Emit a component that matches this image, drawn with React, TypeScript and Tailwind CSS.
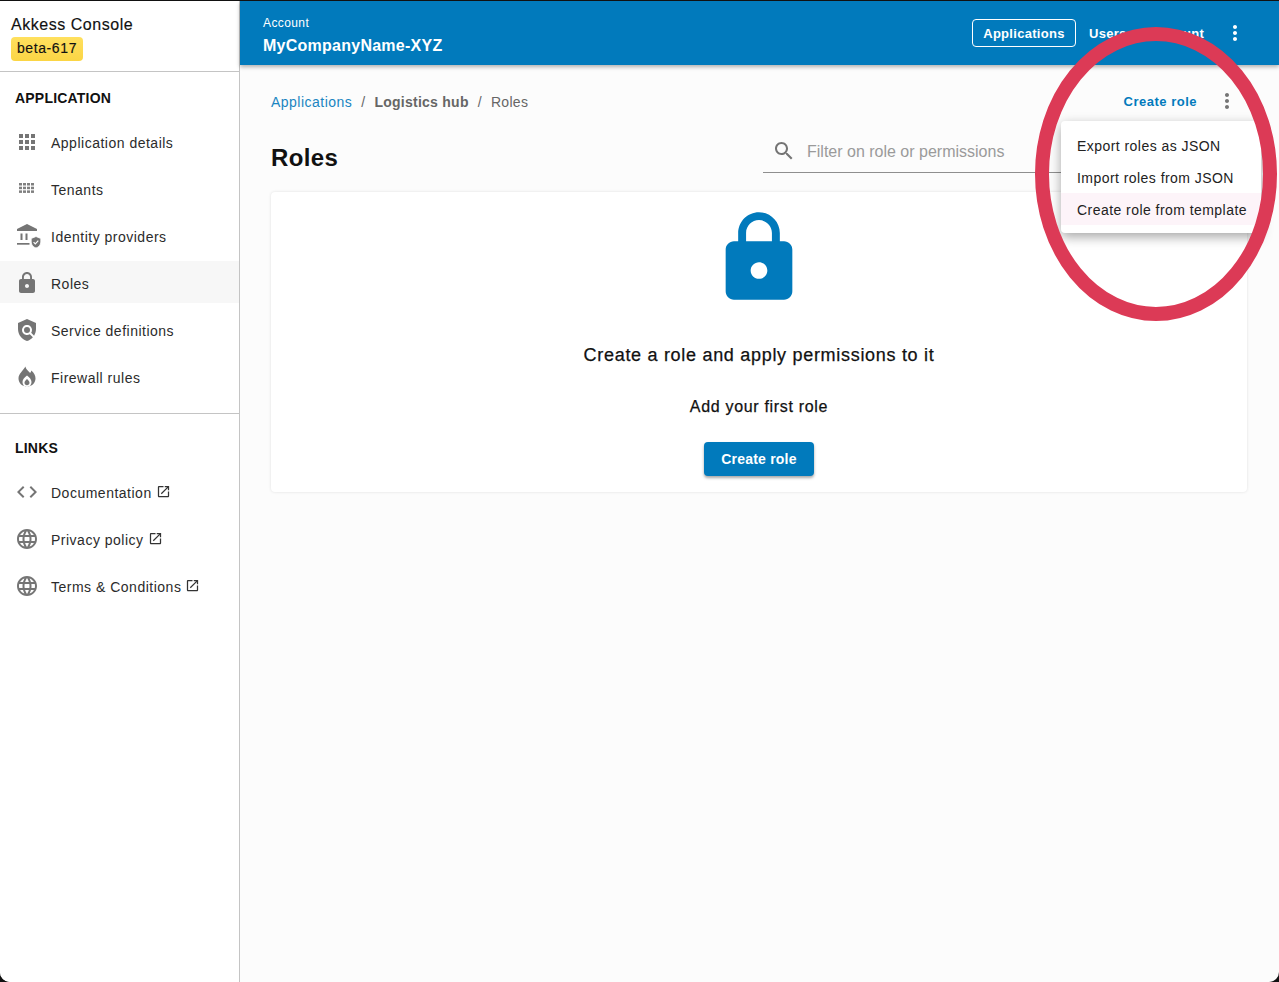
import React from 'react';

const font = { fontFamily: '"Liberation Sans", Arial, sans-serif' };

const paths = {
  apps: 'M4 8h4V4H4v4zm6 12h4v-4h-4v4zm-6 0h4v-4H4v4zm0-6h4v-4H4v4zm6 0h4v-4h-4v4zm6-10v4h4V4h-4zm-6 4h4V4h-4v4zm6 6h4v-4h-4v4zm0 6h4v-4h-4v4z',
  lock: 'M18 8h-1V6c0-2.76-2.24-5-5-5S7 3.24 7 6v2H6c-1.1 0-2 .9-2 2v10c0 1.1.9 2 2 2h12c1.1 0 2-.9 2-2V10c0-1.1-.9-2-2-2zm-6 9c-1.1 0-2-.9-2-2s.9-2 2-2 2 .9 2 2-.9 2-2 2zm3.1-9H8.9V6c0-1.71 1.39-3.1 3.1-3.1 1.71 0 3.1 1.39 3.1 3.1v2z',
  policy: 'M21 5l-9-4-9 4v6c0 5.55 3.84 10.74 9 12 2.3-.56 4.33-1.9 5.88-3.71l-3.12-3.12c-1.94 1.29-4.58 1.07-6.29-.64-1.95-1.95-1.95-5.12 0-7.07 1.95-1.95 5.12-1.95 7.07 0 1.71 1.71 1.92 4.35.64 6.29l2.9 2.9C20.29 15.69 21 13.38 21 11V5zM12 15a3 3 0 1 0 0-6 3 3 0 0 0 0 6z',
  fire: 'M10.5 1.5C11 5 14 6 15 8c.8-.6 1.2-1.5 1.3-2.5 2.7 2.2 4.2 5 4.2 8 0 4.400-3.600 8-8.500 8S3.500 17.900 3.500 13.500c0-4.800 4.400-7.500 7-12zM12 10.500c-2.500 2-4.500 4-4.500 6.500 0 2 1.200 3.600 2.500 4.500h4c1.300-.9 2.500-2.500 2.500-4.500 0-2.500-2-4.500-4.500-6.500zM12 14c-1.500 1.400-2.500 2.500-2.500 3.800 0 1.400 1.100 2.500 2.500 2.500s2.500-1.100 2.500-2.500c0-1.300-1-2.400-2.500-3.800z',
  code: 'M9.4 16.6L4.800 12l4.600-4.600L8 6l-6 6 6 6 1.400-1.400zm5.200 0l4.600-4.600-4.600-4.600L16 6l6 6-6 6-1.400-1.400z',
  globe: 'M11.99 2C6.47 2 2 6.48 2 12s4.47 10 9.99 10C17.52 22 22 17.52 22 12S17.52 2 11.99 2zm6.93 6h-2.95c-.32-1.25-.78-2.45-1.38-3.56 1.84.63 3.37 1.91 4.33 3.56zM12 4.04c.83 1.2 1.48 2.53 1.91 3.96h-3.82c.43-1.43 1.08-2.76 1.91-3.96zM4.26 14C4.1 13.36 4 12.69 4 12s.1-1.36.26-2h3.38c-.08.66-.14 1.32-.14 2 0 .68.06 1.34.14 2H4.26zm.82 2h2.95c.32 1.25.78 2.45 1.38 3.56-1.84-.63-3.37-1.9-4.33-3.56zm2.95-8H5.08c.96-1.66 2.49-2.93 4.33-3.56C8.81 5.55 8.35 6.75 8.03 8zM12 19.96c-.83-1.2-1.48-2.53-1.91-3.96h3.82c-.43 1.43-1.08 2.76-1.91 3.96zM14.34 14H9.66c-.09-.66-.16-1.32-.16-2 0-.68.07-1.35.16-2h4.68c.09.65.16 1.32.16 2 0 .68-.07 1.34-.16 2zm.25 5.56c.6-1.11 1.06-2.31 1.38-3.56h2.95c-.96 1.65-2.49 2.93-4.33 3.56zM16.36 14c.08-.66.14-1.32.14-2 0-.68-.06-1.34-.14-2h3.38c.16.64.26 1.31.26 2s-.1 1.36-.26 2h-3.38z',
  open: 'M19 19H5V5h7V3H5c-1.11 0-2 .9-2 2v14c0 1.1.89 2 2 2h14c1.1 0 2-.9 2-2v-7h-2v7zM14 3v2h3.59l-9.83 9.83 1.41 1.41L19 6.41V10h2V3h-7z',
  search: 'M15.5 14h-.79l-.28-.27C15.41 12.59 16 11.11 16 9.5 16 5.91 13.09 3 9.5 3S3 5.91 3 9.5 5.91 16 9.5 16c1.61 0 3.09-.59 4.23-1.57l.27.28v.79l5 4.99L20.49 19l-4.99-5zm-6 0C7.01 14 5 11.99 5 9.5S7.01 5 9.5 5 14 7.01 14 9.5 11.99 14 9.5 14z',
  more: 'M12 8c1.1 0 2-.9 2-2s-.9-2-2-2-2 .9-2 2 .9 2 2 2zm0 2c-1.1 0-2 .9-2 2s.9 2 2 2 2-.9 2-2-.9-2-2-2zm0 6c-1.1 0-2 .9-2 2s.9 2 2 2 2-.9 2-2-.9-2-2-2z',
};

function Icon({ d, className }: { d: string; className: string }) {
  return (
    <svg viewBox="0 0 24 24" className={className} fill="currentColor" fillRule="evenodd">
      <path d={d} />
    </svg>
  );
}

function TenantsIcon() {
  const cells = [];
  for (let row = 0; row < 3; row++) {
    for (let col = 0; col < 4; col++) {
      cells.push(<rect key={`${row}-${col}`} x={4 + col * 4} y={6 + row * 3.7} width="3" height="2.5" />);
    }
  }
  return (
    <svg viewBox="0 0 24 24" className="h-6 w-6 text-[#808080]" fill="currentColor">
      {cells}
    </svg>
  );
}

function BankIcon() {
  return (
    <svg viewBox="0 0 24 24" className="h-6 w-6 overflow-visible text-[#757575]" fill="currentColor">
      <path d="M12 0 2 5v2h20V5L12 0z" />
      <rect x="5.500" y="9.500" width="2" height="6.500" />
      <rect x="10.500" y="9.500" width="2" height="6.500" />
      <rect x="2" y="19" width="12.500" height="1.700" />
      <path d="M21 12.500l4.800 2v3.500c0 2.800-2 5.300-4.800 6-2.800-.7-4.800-3.200-4.800-6v-3.500l4.800-2z" stroke="#fff" strokeWidth="0.8" />
      <path d="M18.600 18.200l1.700 1.700 3-3.200" stroke="#fff" strokeWidth="1.200" fill="none" />
    </svg>
  );
}

function NavItem({ icon, label, active, external }: { icon: React.ReactNode; label: string; active?: boolean; external?: boolean }) {
  return (
    <div className={`flex h-[42px] items-center pl-[15px] pt-[4px] text-[14px] tracking-[0.5px] text-[#2b2b2b] ${active ? 'bg-[#f7f7f7]' : ''}`}>
      <div className="flex w-9 shrink-0 items-center -translate-y-px">{icon}</div>
      <span>{label}</span>
      {external && <Icon d={paths.open} className="mb-[3px] ml-[4px] h-[15px] w-[15px] text-[#333]" />}
    </div>
  );
}

const navIcon = 'h-6 w-6 text-[#757575]';

function Sidebar() {
  return (
    <aside className="flex w-[240px] shrink-0 flex-col border-r border-[#c4c4c4] bg-white">
      <div className="h-[70px] pl-[11px] pt-[15px]">
        <div className="text-[16px] leading-[18px] tracking-[0.53px] text-[#111] [-webkit-text-stroke:0.15px]">Akkess Console</div>
        <div className="mt-[3px] inline-flex h-6 w-[72px] items-center justify-center rounded-[4px] bg-gradient-to-b from-[#ffe05e] to-[#fbd544] pb-px text-[14px] tracking-[0.6px] text-[#111] [-webkit-text-stroke:0.15px]">
          beta-617
        </div>
      </div>
      <div className="h-px bg-[#c4c4c4]" />
      <div className="h-[341px]">
        <h2 className="pl-[15px] pt-[18px] text-[14px] font-bold leading-[17px] tracking-[0.2px] text-[#111]">APPLICATION</h2>
        <div className="mt-[13px] flex flex-col gap-[5px]">
          <NavItem icon={<Icon d={paths.apps} className={navIcon} />} label="Application details" />
          <NavItem icon={<TenantsIcon />} label="Tenants" />
          <NavItem icon={<BankIcon />} label="Identity providers" />
          <NavItem icon={<Icon d={paths.lock} className={navIcon} />} label="Roles" active />
          <NavItem icon={<Icon d={paths.policy} className={navIcon} />} label="Service definitions" />
          <NavItem icon={<Icon d={paths.fire} className={navIcon} />} label="Firewall rules" />
        </div>
      </div>
      <div className="h-px bg-[#c4c4c4]" />
      <div>
        <h2 className="pl-[15px] pt-[26px] text-[14px] font-bold leading-[17px] tracking-[0.2px] text-[#111]">LINKS</h2>
        <div className="mt-[13px] flex flex-col gap-[5px]">
          <NavItem icon={<Icon d={paths.code} className={navIcon} />} label="Documentation" external />
          <NavItem icon={<Icon d={paths.globe} className={navIcon} />} label="Privacy policy" external />
          <NavItem icon={<Icon d={paths.globe} className={navIcon} />} label="Terms & Conditions" external />
        </div>
      </div>
    </aside>
  );
}

function Header() {
  return (
    <header className="relative z-10 flex h-[64px] shrink-0 items-center justify-between bg-[#017abc] pl-[23px] pr-[32px] text-white shadow-[0_2px_4px_rgba(0,0,0,0.3)]">
      <div className="pt-[5px]">
        <div className="text-[12px] leading-[14px] tracking-[0.4px]">Account</div>
        <div className="mt-[7px] text-[16px] font-bold leading-[18px] tracking-[0.25px]">MyCompanyName-XYZ</div>
      </div>
      <div className="flex items-center">
        <div className="flex h-[28px] w-[104px] items-center justify-center rounded-[4px] border border-white pt-[2px] text-[13px] font-bold tracking-[0.3px]">
          Applications
        </div>
        <div className="ml-[13px] w-[135px] pt-[2px] text-[13px] font-bold tracking-[0.3px] [word-spacing:4px]">Users &amp; account</div>
        <Icon d={paths.more} className="-ml-[1px] h-6 w-6" />
      </div>
    </header>
  );
}

function EmptyCard() {
  return (
    <section className="mt-[19px] flex h-[300px] flex-col items-center rounded-[4px] bg-white shadow-[0_0_3px_rgba(0,0,0,0.12)]">
      <Icon d={paths.lock} className="mt-[16px] h-[100px] w-[100px] text-[#017abc]" />
      <p className="mt-[36px] text-[18px] leading-[22px] tracking-[0.7px] text-[#111] [-webkit-text-stroke:0.25px]">Create a role and apply permissions to it</p>
      <p className="mt-[31px] text-[16px] leading-[20px] tracking-[0.68px] text-[#111] [-webkit-text-stroke:0.25px]">Add your first role</p>
      <button className="mt-[25px] flex h-[34px] w-[110px] items-center justify-center rounded-[4px] bg-[#017abc] text-[14px] font-bold tracking-[0.2px] text-white shadow-[0_2px_3px_rgba(0,0,0,0.35)]">
        Create role
      </button>
    </section>
  );
}

function Menu() {
  return (
    <div className="absolute left-[821px] top-[56px] w-[200px] rounded-[4px] bg-white py-[8px] text-[14px] tracking-[0.45px] text-[#222] shadow-[0_4px_12px_rgba(0,0,0,0.35)]">
      <div className="flex h-8 items-center pl-4 pt-[2px]">Export roles as JSON</div>
      <div className="flex h-8 items-center pl-4 pt-[2px]">Import roles from JSON</div>
      <div className="flex h-8 items-center whitespace-nowrap bg-[#fdf4f9] pl-4 pt-[2px]">Create role from template</div>
    </div>
  );
}

export default function App() {
  return (
    <div className="h-screen bg-[#111]">
      <div className="relative flex h-full overflow-hidden rounded-b-[10px] border-t border-[#111] bg-[#fcfcfc]" style={font}>
        <Sidebar />
        <div className="flex min-w-0 flex-1 flex-col">
          <Header />
          <main className="relative pl-[31px] pr-[32px]">
            <div className="flex h-[72px] items-center justify-between">
              <div className="flex items-center pt-[2px] text-[14px] tracking-[0.3px] text-[#666]">
                <span className="tracking-[0.48px] text-[#1a85c1]">Applications</span>
                <span className="mx-[9px]">/</span>
                <span className="font-bold tracking-[0.25px]">Logistics hub</span>
                <span className="mx-[9px]">/</span>
                <span>Roles</span>
              </div>
              <div className="flex items-center">
                <span className="pt-[2px] text-[13px] font-bold tracking-[0.5px] text-[#017abc]">Create role</span>
                <Icon d={paths.more} className="ml-[18px] mr-[8px] h-6 w-6 text-[#757575]" />
              </div>
            </div>
            <div className="flex h-[36px] items-start justify-between">
              <h1 className="mt-[7px] text-[24px] font-bold leading-[28px] tracking-[0.4px] text-[#111]">Roles</h1>
              <div className="flex h-[36px] w-[484px] items-center border-b border-[#8f8f8f] pb-[7px] pl-[9px]">
                <Icon d={paths.search} className="h-6 w-6 text-[#757575]" />
                <span className="ml-[11px] pt-[2px] text-[16px] text-[#9a9a9a]">Filter on role or permissions</span>
              </div>
            </div>
            <EmptyCard />
            <Menu />
          </main>
        </div>
        <svg className="pointer-events-none absolute left-[1030px] top-[19px] z-20 h-[310px] w-[249px]" viewBox="0 0 249 310" fill="none">
          <ellipse cx="126" cy="154" rx="114" ry="140" stroke="#dc3a56" strokeWidth="14" />
        </svg>
      </div>
    </div>
  );
}
